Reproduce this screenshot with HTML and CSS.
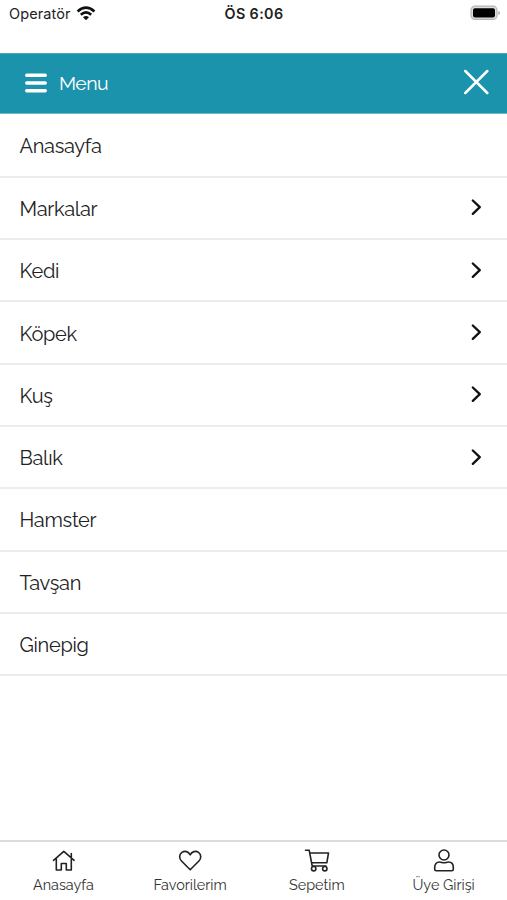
FILE: index.html
```html
<!DOCTYPE html>
<html lang="tr">
<head>
<meta charset="utf-8">
<title>Menu</title>
<link rel="stylesheet" href="styles.css">
</head>
<body>
<div class="screen">
  <div class="status">
    <div class="carrier"><span>Operatör</span>
      <svg class="wifi" width="20" height="15" viewBox="0 0 20 15" fill="none" stroke="#111" stroke-width="2.7"><path d="M1.6 5.4Q10-2 18.4 5.4M4.8 8.7Q10 4.2 15.2 8.7"/><path d="M7 11.2Q10 8.8 13 11.2L10 14.2Z" fill="#111" stroke="none"/></svg>
    </div>
    <div class="clock">ÖS 6:06</div>
    <svg class="battery" width="32" height="16" viewBox="0 0 32 16"><rect x="2" y="1.2" width="26" height="13.2" rx="4" fill="#ddd" stroke="#b4b4b4" stroke-width="1.2"/><rect x="4" y="3.2" width="22" height="9.4" rx="2" fill="#000"/><path d="M29.3 6q1.7 .5 1.7 2t-1.7 2z" fill="#aaa"/></svg>
  </div>
  <header class="bar">
    <svg class="burger" width="22" height="20" viewBox="0 0 22 20" stroke="#fff" stroke-width="3.6" stroke-linecap="round"><path d="M1.8 2.2H20.2M1.8 10H20.2M1.8 17.8H20.2"/></svg>
    <span class="title">Menu</span>
    <svg class="close" width="26" height="26" viewBox="0 0 26 26" stroke="#fff" stroke-width="2.5" stroke-linecap="round"><path d="M2.3 2L24.3 24M24.3 2L2.3 24"/></svg>
  </header>
  <nav class="menu">
    <a class="row"><span>Anasayfa</span></a>
    <a class="row"><span>Markalar</span><svg class="chev" width="12" height="18" viewBox="0 0 12 18"><path d="M2.8 2.5L9.8 9.2L2.8 15.9"/></svg></a>
    <a class="row"><span>Kedi</span><svg class="chev" width="12" height="18" viewBox="0 0 12 18"><path d="M2.8 2.5L9.8 9.2L2.8 15.9"/></svg></a>
    <a class="row"><span>Köpek</span><svg class="chev" width="12" height="18" viewBox="0 0 12 18"><path d="M2.8 2.5L9.8 9.2L2.8 15.9"/></svg></a>
    <a class="row"><span>Kuş</span><svg class="chev" width="12" height="18" viewBox="0 0 12 18"><path d="M2.8 2.5L9.8 9.2L2.8 15.9"/></svg></a>
    <a class="row"><span>Balık</span><svg class="chev" width="12" height="18" viewBox="0 0 12 18"><path d="M2.8 2.5L9.8 9.2L2.8 15.9"/></svg></a>
    <a class="row"><span>Hamster</span></a>
    <a class="row"><span>Tavşan</span></a>
    <a class="row"><span>Ginepig</span></a>
  </nav>
  <footer class="tabs">
    <a class="tab"><svg width="26" height="24" viewBox="0 0 26 24"><path d="M3.5 11.3L13.8 2.3L24.1 11.3M6.3 9.8V21H11.3V14.5H16.3V21H21.3V9.8M21.3 8.5V4.5"/></svg><span>Anasayfa</span></a>
    <a class="tab"><svg width="26" height="24" viewBox="0 0 26 24"><path d="M13.2 20.8L4.5 12C1.8 9.2 2.2 5.3 4.9 3.4C7.8 1.4 11.4 2.5 13.2 5.8C15 2.5 18.6 1.4 21.5 3.4C24.2 5.3 24.6 9.2 21.9 12Z"/></svg><span>Favorilerim</span></a>
    <a class="tab"><svg width="26" height="24" viewBox="0 0 26 24"><path d="M1.5 1.3H5.2L8.2 17H22M6 4H24.5L22.8 13.8H7.6"/><circle cx="9.7" cy="19.7" r="2.2"/><circle cx="20.8" cy="19.7" r="2.2"/></svg><span>Sepetim</span></a>
    <a class="tab"><svg width="26" height="24" viewBox="0 0 26 24"><circle cx="13" cy="6" r="5"/><path d="M8.5 13C10.5 13 11 13.8 13 13.8S15.5 13 17.5 13C20.5 13 22.3 15.3 22.3 18.5V20.2Q22.3 21.7 20.8 21.7H5.2Q3.7 21.7 3.7 20.2V18.5C3.7 15.3 5.5 13 8.5 13Z"/></svg><span>Üye Girişi</span></a>
  </footer>
</div>
</body>
</html>
```

FILE: styles.css
```css
* { box-sizing: border-box; }
body { margin: 0; background: #fff; color: #222; font-family: Raleway, Lato, sans-serif; }
.screen { height: 900px; display: flex; flex-direction: column; overflow: hidden; }
.status { height: 52.5px; display: grid; grid-template-columns: 1fr auto 1fr; align-items: start; padding: 5px 6px 0 9px; font-family: Inter, sans-serif; line-height: 18px; }
.carrier { display: flex; gap: 5px; font-size: 14.5px; letter-spacing: 0.1px; }
.wifi { margin-top: 0.5px; }
.clock { font-size: 14.3px; font-weight: 600; letter-spacing: 0.4px; margin-left: -2px; }
.battery { justify-self: end; }
.bar { height: 61px; background: #1b93ad; border-top: 1px solid #4aa9be; border-bottom: 1px solid #6ebacb; display: flex; align-items: center; padding: 0 18px 2px 25px; color: #fff; }
.burger { margin-top: 1px; }
.title { font-size: 19.5px; letter-spacing: -0.6px; margin: 2px 0 0 12px; }
.close { margin-left: auto; }
.row { height: 62.3px; border-bottom: 2px solid #ececec; padding: 2px 25px 0 19.5px; display: flex; align-items: center; justify-content: space-between; font-size: 20px; line-height: 24px; letter-spacing: -0.3px; }
.row:first-child { height: 64.3px; }
.chev { fill: none; stroke: #111; stroke-width: 2.3; stroke-linecap: round; stroke-linejoin: round; margin-top: -3px; }
.tabs { margin-top: auto; height: 60.5px; border-top: 2px solid #dcdcdc; display: grid; grid-template-columns: repeat(4, 1fr); }
.tab { display: flex; flex-direction: column; align-items: center; padding-top: 7px; font-size: 14.4px; line-height: 18px; color: #333; }
.tab svg { fill: none; stroke: #222; stroke-width: 1.6; stroke-linecap: round; stroke-linejoin: round; margin-bottom: 3px; }
```
